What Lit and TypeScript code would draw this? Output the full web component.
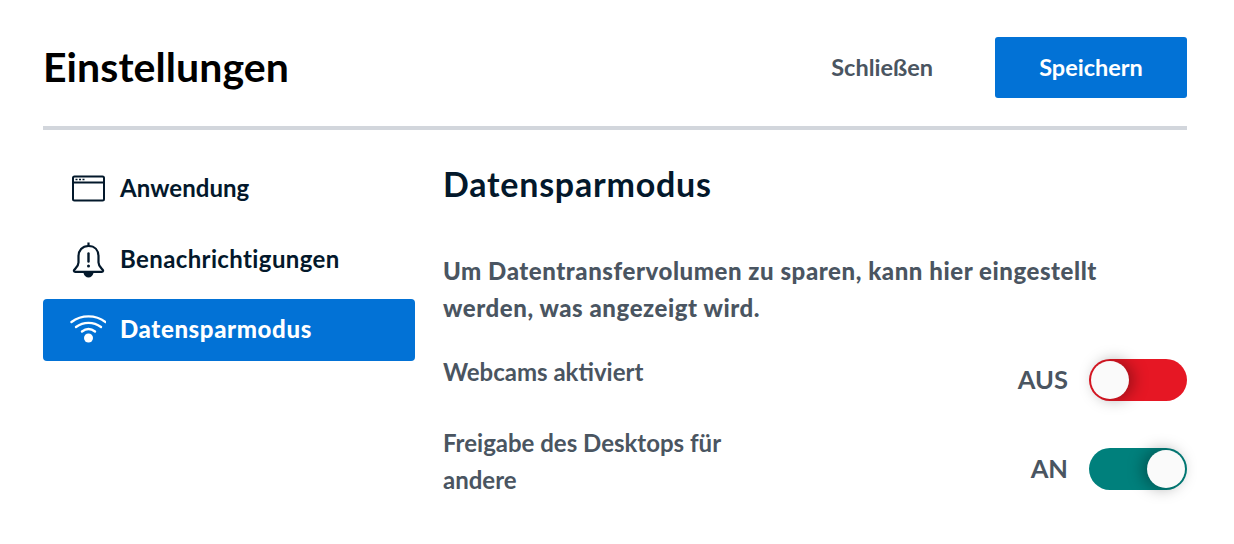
import { LitElement, html, css } from "lit";
import { customElement } from "lit/decorators.js";

@customElement("app-root")
export class AppRoot extends LitElement {
  static styles = css`
    :host { display: block; width: 1234px; height: 544px; background: #fff; overflow: hidden; font-family: "Lato", "Noto Sans", sans-serif; box-sizing: border-box; padding: 37px 47px 0 43px; }
    * { box-sizing: border-box; }
    .header { display: flex; align-items: center; height: 61px; }
    h1 { margin: 0; flex: 1; font-size: 41px; font-weight: 700; color: #000; line-height: 61px; letter-spacing: .08px; padding-bottom: 2px; }
    .close { font-size: 23.5px; font-weight: 700; color: #4a5561; margin-right: 62px; padding-bottom: 2px; }
    .save { width: 192px; height: 61px; background: #0272d6; color: #fff; border-radius: 3px; font-size: 23.5px; font-weight: 700; display: flex; align-items: center; justify-content: center; padding-bottom: 2px; }
    .rule { height: 4px; background: #d2d6dc; margin-top: 28px; }
    .body { display: flex; gap: 28px; margin-top: 28px; }
    nav { width: 372px; display: flex; flex-direction: column; gap: 8.5px; }
    .item { height: 62px; display: flex; align-items: center; padding-left: 27px; gap: 14px; font-size: 24px; font-weight: 700; color: #03182b; border-radius: 4px; }
    .item svg { width: 36px; height: 36px; flex: none; }
    .item span { padding-bottom: 3px; letter-spacing: .38px; }
    .item span.tight { letter-spacing: .05px; }
    .item.on { background: #0272d6; color: #fff; }
    .item.on span { font-weight: 900; letter-spacing: .62px; }
    main { flex: 1; }
    h2 { margin: 0; font-size: 34px; font-weight: 700; color: #03182b; line-height: 52px; letter-spacing: .77px; padding-bottom: 4px; height: 54px; }
    p { margin: 40px 0 0; font-size: 24px; font-weight: 900; color: #4a5561; line-height: 37px; width: 680px; letter-spacing: .56px; }
    .row { display: flex; justify-content: space-between; align-items: flex-start; color: #4a5561; font-weight: 700; font-size: 24px; line-height: 37px; }
    .row .label { width: 320px; }
    .r1 { margin-top: 27px; }
    .r2 { margin-top: 23px; }
    .ctl { display: flex; align-items: center; gap: 21px; font-size: 25.5px; }
    .ctl span { padding-bottom: 2px; }
    .r1 .ctl { margin-top: 6px; }
    .r2 .ctl { margin-top: 24px; }
    .sw { width: 98px; height: 42px; border-radius: 21px; position: relative; }
    .sw::after { content: ""; position: absolute; top: 2px; width: 38px; height: 38px; border-radius: 50%; background: #fafafa; }
    .sw.off { background: #e61724; }
    .sw.off::after { left: 2px; box-shadow: 4px 0 16px rgba(0,0,0,.36); }
    .sw.an { background: #00807c; }
    .sw.an::after { right: 2px; box-shadow: -4px 0 16px rgba(0,0,0,.36); }
  `;

  render() {
    return html`
      <div class="header">
        <h1>Einstellungen</h1>
        <span class="close">Schließen</span>
        <div class="save">Speichern</div>
      </div>
      <div class="rule"></div>
      <div class="body">
        <nav>
          <div class="item">
            <svg viewBox="0 0 36 36" fill="none" stroke="currentColor" stroke-width="2"><rect x="3" y="5.500" width="31" height="24" rx="1.500"/><path d="M3 11.500h31"/><path d="M5.500 8.500h2M9 8.500h2M12.500 8.500h2" stroke-width="1.700"/></svg>
            <span class="tight">Anwendung</span>
          </div>
          <div class="item">
            <svg viewBox="0 0 36 36" fill="none" stroke="currentColor" stroke-width="2.200" stroke-linejoin="round"><path d="M18.500 .5v3.500"/><path d="M18.500 4c-6.500 0-10 4.500-10 10.500v6c0 3.500-2 5-4 7-1 1-.8 2.400 .8 2.400h26.400c1.600 0 1.800-1.400 .8-2.400-2-2-4-3.500-4-7v-6C28.500 8.500 25 4 18.500 4z"/><path d="M18.500 11.500v8" stroke-linecap="round" stroke-width="2.400"/><circle cx="18.500" cy="24" r="1.500" fill="currentColor" stroke="none"/><path d="M13.500 31h10c-.8 2.800-2.600 4.500-5 4.500s-4.200-1.700-5-4.500z" fill="currentColor" stroke="none"/></svg>
            <span>Benachrichtigungen</span>
          </div>
          <div class="item on">
            <svg viewBox="0 0 36 36" fill="none" stroke="currentColor" stroke-width="2.400" stroke-linecap="round"><path d="M1.500 10c10-7.500 24-7.500 34 0"/><path d="M6 15c7.500-5.500 17.500-5.500 25 0"/><path d="M12 19.500c4-3 9-3 13 0"/><circle cx="18.500" cy="26" r="4.500" fill="currentColor" stroke="none"/></svg>
            <span>Datensparmodus</span>
          </div>
        </nav>
        <main>
          <h2>Datensparmodus</h2>
          <p>Um Datentransfervolumen zu sparen, kann hier eingestellt werden, was angezeigt wird.</p>
          <div class="row r1">
            <div class="label">Webcams aktiviert</div>
            <div class="ctl"><span>AUS</span><div class="sw off"></div></div>
          </div>
          <div class="row r2">
            <div class="label">Freigabe des Desktops für andere</div>
            <div class="ctl"><span>AN</span><div class="sw an"></div></div>
          </div>
        </main>
      </div>
    `;
  }
}
